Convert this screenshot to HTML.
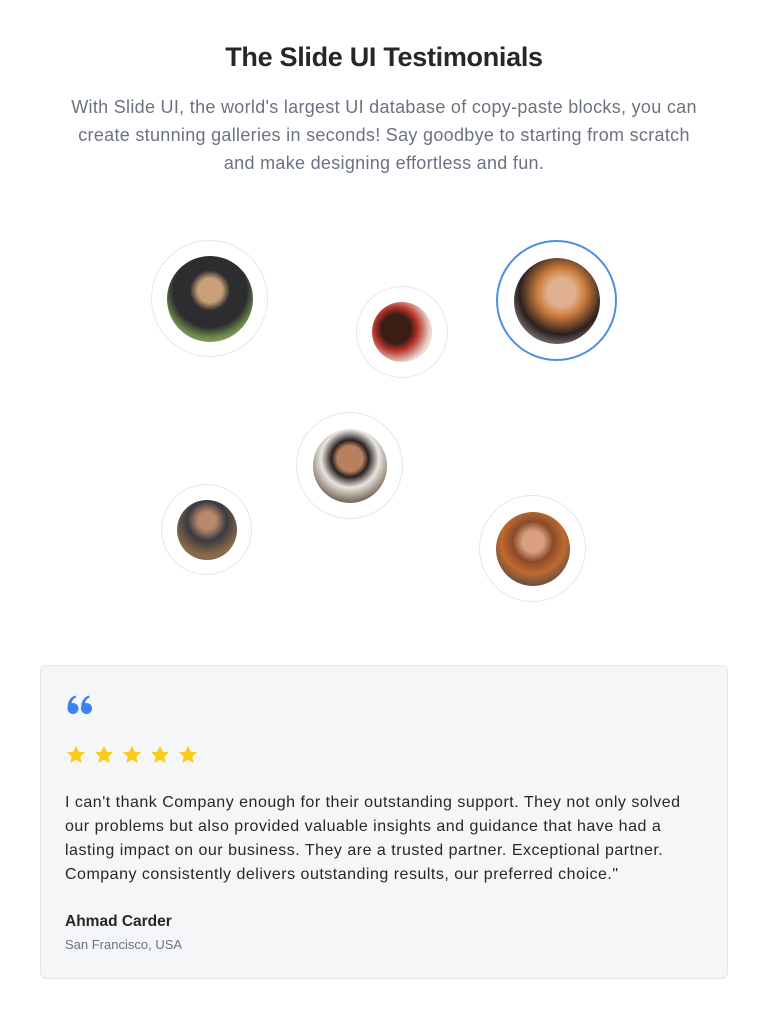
<!DOCTYPE html>
<html><head><meta charset="utf-8"><style>
body{margin:0;width:768px;height:1019px;background:#fff;font-family:"Liberation Sans",sans-serif;position:relative;overflow:hidden}
h1{position:absolute;top:42px;left:0;width:768px;text-align:center;margin:0;font-size:27px;font-weight:700;color:#27272a;letter-spacing:-0.3px}
.sub{position:absolute;top:93px;left:62px;width:644px;text-align:center;font-size:18px;letter-spacing:0.3px;line-height:28px;color:#6b7280}
.c{position:absolute;border-radius:50%;border:1px solid #e5e7eb;box-sizing:border-box;background:#fff}
.c i{position:absolute;border-radius:50%;left:50%;top:50%;transform:translate(-50%,-50%)}
.card{position:absolute;left:40px;top:665px;width:688px;height:314px;box-sizing:border-box;background:#f5f6f8;border:1px solid #e5e7eb;border-radius:6px}
.q{position:absolute;left:26px;top:29px}
.stars{position:absolute;left:25px;top:79px}
.txt{position:absolute;left:24px;top:125px;width:630px;font-size:16px;letter-spacing:0.5px;line-height:24px;color:#27272a}
.n{position:absolute;left:24px;top:247px;font-size:15.5px;font-weight:700;color:#27272a}
.l{position:absolute;left:24px;top:271px;font-size:13px;color:#6b7280}
</style></head><body>
<h1>The Slide UI Testimonials</h1>
<div class="sub">With Slide UI, the world's largest UI database of copy-paste blocks, you can create stunning galleries in seconds! Say goodbye to starting from scratch and make designing effortless and fun.</div>
<div class="c" style="left:151px;top:240px;width:117px;height:117px"><i style="width:86px;height:86px;background:radial-gradient(circle at 50% 40%,#c9a07a 0 18%,#2d2d30 30% 55%,#6b8a4a 70%,#cfd9a0)"></i></div>
<div class="c" style="left:356px;top:286px;width:92px;height:92px"><i style="width:60px;height:60px;background:radial-gradient(circle at 40% 45%,#3a1e16 0 30%,#b8342a 45%,#e8d8d0 70%)"></i></div>
<div class="c" style="left:496px;top:240px;width:121px;height:121px;border:2px solid #4a90e2"><i style="width:86px;height:86px;background:radial-gradient(circle at 55% 40%,#e0b090 0 20%,#c97a3a 35%,#2a2020 60%,#e8e0d8)"></i></div>
<div class="c" style="left:296px;top:412px;width:107px;height:107px"><i style="width:74px;height:74px;background:radial-gradient(circle at 50% 40%,#b88060 0 22%,#2a2020 32%,#e8e6e0 50%,#7a6a5a 75%)"></i></div>
<div class="c" style="left:161px;top:484px;width:91px;height:91px"><i style="width:60px;height:60px;background:radial-gradient(circle at 50% 35%,#b8886a 0 18%,#3a3a40 40%,#8a6a4a 70%)"></i></div>
<div class="c" style="left:479px;top:495px;width:107px;height:107px"><i style="width:74px;height:74px;background:radial-gradient(circle at 50% 40%,#d8a080 0 18%,#8a4a2a 35%,#c06a30 55%,#5a4a40 80%)"></i></div>
<div class="card">
<svg class="q" width="26" height="20" viewBox="0 0 26 20" fill="#3b82f6"><circle cx="6" cy="13.5" r="5.5"/><path d="M0.6 13 C0.6 6 3.5 2 8.5 0.5 L9.3 2.3 C6 3.8 4.5 6.5 4.5 9 Z"/><circle cx="19.5" cy="13.5" r="5.5"/><path d="M14.1 13 C14.1 6 17 2 22 0.5 L22.8 2.3 C19.5 3.8 18 6.5 18 9 Z"/></svg>
<svg class="stars" width="140" height="20" viewBox="0 0 140 20" fill="#facc15"><defs><path id="s" d="M10 0.8 L12.7 6.6 L19 7.3 L14.3 11.6 L15.6 17.9 L10 14.7 L4.4 17.9 L5.7 11.6 L1 7.3 L7.3 6.6 Z"/></defs><use href="#s"/><use href="#s" x="28"/><use href="#s" x="56"/><use href="#s" x="84"/><use href="#s" x="112"/></svg>
<div class="txt">I can't thank Company enough for their outstanding support. They not only solved our problems but also provided valuable insights and guidance that have had a lasting impact on our business. They are a trusted partner. Exceptional partner. Company consistently delivers outstanding results, our preferred choice."</div>
<div class="n">Ahmad Carder</div>
<div class="l">San Francisco, USA</div>
</div>
</body></html>
